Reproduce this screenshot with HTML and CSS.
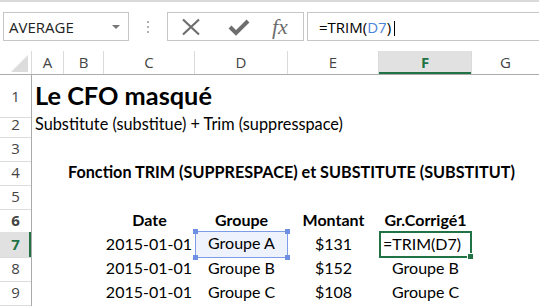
FILE: index.html
```html
<!DOCTYPE html>
<html lang="fr">
<head>
  <meta charset="UTF-8" />
  <title>TRIM et SUBSTITUTE</title>
  <link rel="stylesheet" href="styles.css">
</head>
<body>
  <!-- Barre de formule -->
  <div class="toolbar">
    <div class="namebox">
      <span>AVERAGE</span>
      <span class="arrow"></span>
    </div>
    <div class="dots"><i></i><i></i><i></i></div>
    <div class="buttons">
      <svg class="icon" width="20" height="18" viewBox="0 0 20 18">
        <path d="M2 1.5 L18 16.5 M18 1.5 L2 16.5" stroke="#6e6e6e" stroke-width="2.2" fill="none"/>
      </svg>
      <svg class="icon" width="22" height="18" viewBox="0 0 22 18">
        <path d="M2 9 L8 15 L20 3" stroke="#6e6e6e" stroke-width="4" fill="none"/>
      </svg>
      <span class="fx">fx</span>
    </div>
    <div class="formula">
      =TRIM(<span class="ref">D7</span>)<span class="caret"></span>
    </div>
  </div>

  <!-- Feuille -->
  <div class="sheet">
    <div class="row colhead">
      <div class="corner"><span class="tri"></span></div>
      <div>A</div><div>B</div><div>C</div><div>D</div><div>E</div>
      <div class="active">F</div><div>G</div>
    </div>

    <div class="row r1">
      <div class="rh">1</div>
      <div class="span title">Le CFO masqué</div>
    </div>
    <div class="row">
      <div class="rh">2</div>
      <div class="span">Substitute (substitue) + Trim (suppresspace)</div>
    </div>
    <div class="row">
      <div class="rh">3</div>
    </div>
    <div class="row">
      <div class="rh">4</div>
      <div class="span heading">Fonction TRIM (SUPPRESPACE) et SUBSTITUTE (SUBSTITUT)</div>
    </div>
    <div class="row">
      <div class="rh">5</div>
    </div>
    <div class="row bold">
      <div class="rh">6</div>
      <div></div><div></div>
      <div class="c">Date</div>
      <div class="c">Groupe</div>
      <div class="c">Montant</div>
      <div class="c">Gr.Corrigé1</div>
    </div>
    <div class="row">
      <div class="rh active">7</div>
      <div></div><div></div>
      <div class="r">2015-01-01</div>
      <div class="c picked">
        Groupe A
        <span class="h tl"></span><span class="h tr"></span>
        <span class="h bl"></span><span class="h br"></span>
      </div>
      <div class="c">$131</div>
      <div class="editing">=TRIM(D7)<span class="fill"></span></div>
    </div>
    <div class="row">
      <div class="rh">8</div>
      <div></div><div></div>
      <div class="r">2015-01-01</div>
      <div class="c">Groupe B</div>
      <div class="c">$152</div>
      <div class="c">Groupe B</div>
    </div>
    <div class="row">
      <div class="rh">9</div>
      <div></div><div></div>
      <div class="r">2015-01-01</div>
      <div class="c">Groupe C</div>
      <div class="c">$108</div>
      <div class="c">Groupe C</div>
    </div>
    <div class="row">
      <div class="rh"></div>
    </div>
  </div>
</body>
</html>
```

FILE: styles.css
```css
body {
  margin: 0;
  background: #fff;
  font-family: Lato, sans-serif;
  overflow: hidden;
}
.toolbar {
  height: 51px;
  box-sizing: border-box;
  border-top: 2px solid #dadada;
  display: flex;
  align-items: flex-start;
  padding-top: 10px;
  font-family: "Open Sans", sans-serif;
}
.namebox {
  margin-left: 3px;
  width: 126px;
  height: 29px;
  box-sizing: border-box;
  border: 1px solid #c6c6c6;
  display: flex;
  align-items: center;
  justify-content: space-between;
  padding: 0 8px 0 5px;
  font-size: 15px;
  color: #222;
}
.arrow {
  border-left: 4px solid transparent;
  border-right: 4px solid transparent;
  border-top: 4px solid #777;
}
.dots {
  width: 38px;
  height: 29px;
  display: flex;
  flex-direction: column;
  align-items: center;
  justify-content: center;
  gap: 3px;
}
.dots i {
  width: 2px;
  height: 2px;
  background: #b0b0b0;
}
.buttons {
  width: 137px;
  height: 29px;
  box-sizing: border-box;
  border: 1px solid #c6c6c6;
  display: flex;
  align-items: center;
  padding-left: 13px;
  gap: 27px;
}
.fx {
  font-family: "Liberation Serif", serif;
  font-style: italic;
  font-size: 22px;
  color: #6e6e6e;
  margin-left: -5px;
}
.formula {
  flex: 1;
  margin-left: 3px;
  height: 29px;
  box-sizing: border-box;
  border: 1px solid #c6c6c6;
  border-right: none;
  display: flex;
  align-items: center;
  padding-left: 11px;
  font-size: 15px;
  color: #000;
}
.formula .ref {
  color: #4a86d8;
}
.caret {
  width: 1px;
  height: 15px;
  background: #000;
  margin-left: 3px;
  margin-top: 3px;
}

.sheet {
  font-size: 16px;
}
.row {
  display: grid;
  grid-template-columns: 32px 32px 40px 91px 93px 91px 93px 1fr;
  height: 24px;
  line-height: 24px;
}
.row > div {
  white-space: nowrap;
}
.r1 {
  height: 37px;
  line-height: 40px;
}
.rh {
  box-sizing: border-box;
  border-right: 1px solid #ababab;
  border-bottom: 1px solid #dcdcdc;
  text-align: center;
  font-family: "Open Sans", sans-serif;
  font-size: 15px;
  color: #444;
  line-height: 25px;
}
.r1 .rh {
  line-height: 42px;
}
.rh.active {
  background: #e1e1e1;
  box-shadow: inset -2px 0 #217346;
  color: #217346;
  font-weight: bold;
}
.colhead {
  height: 24px;
  box-sizing: border-box;
  border-bottom: 1px solid #ababab;
  font-family: "Open Sans", sans-serif;
  font-size: 15px;
  color: #444;
  line-height: 23px;
}
.colhead > div {
  box-sizing: border-box;
  border-right: 1px solid #dadada;
  text-align: center;
}
.colhead > div:last-child {
  border-right: none;
}
.colhead .active {
  background: #e1e1e1;
  box-shadow: inset 0 -2px #217346;
  color: #217346;
  font-weight: bold;
}
.corner {
  position: relative;
}
.tri {
  position: absolute;
  right: 3px;
  bottom: 2px;
  border-left: 17px solid transparent;
  border-bottom: 17px solid #dcdcdc;
}
.span {
  grid-column: 2 / -1;
  padding-left: 3px;
  font-size: 16.3px;
}
.title {
  font-size: 25.3px;
  font-weight: bold;
}
.heading {
  font-weight: bold;
  font-size: 16.2px;
  padding-left: 36px;
}
.bold {
  font-weight: bold;
}
.c {
  text-align: center;
}
.r {
  text-align: right;
  padding-right: 3px;
}
.picked {
  position: relative;
  background: #eef2fc;
  box-sizing: border-box;
  border: 1.5px solid #7d9be6;
  margin-top: -1px;
  line-height: 22px;
}
.h {
  position: absolute;
  width: 5px;
  height: 5px;
  background: #6f8fe3;
}
.tl { left: -3px; top: -3px; }
.tr { right: -3px; top: -3px; }
.bl { left: -3px; bottom: -3px; }
.br { right: -3px; bottom: -3px; }
.editing {
  position: relative;
  box-sizing: border-box;
  border: 2px solid #217346;
  margin-top: -1px;
  padding-left: 2px;
  line-height: 21px;
}
.fill {
  position: absolute;
  right: -4px;
  bottom: -4px;
  width: 5px;
  height: 5px;
  background: #217346;
  border: 1px solid #fff;
}
```
